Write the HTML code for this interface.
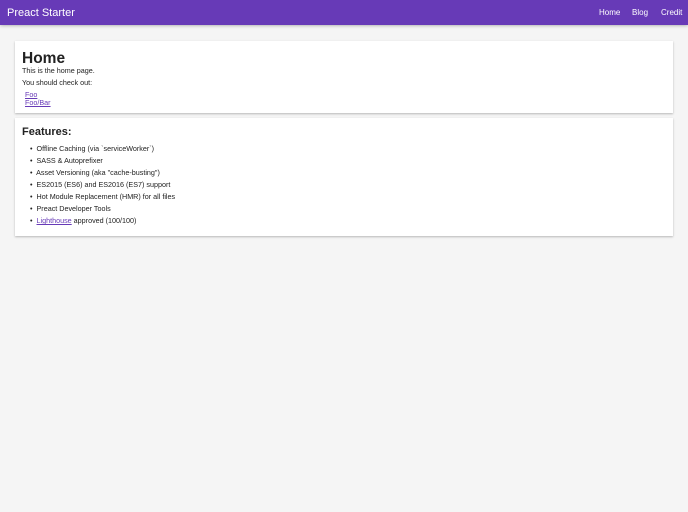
<!DOCTYPE html>
<html><head><style>
*{box-sizing:border-box}
body{margin:0;background:#f5f5f5;font-family:"Liberation Sans",sans-serif;color:#222;width:688px;height:512px;overflow:hidden}
.hdr{position:absolute;left:0;top:0;width:688px;height:25px;background:#673ab7;box-shadow:0 0 4px rgba(0,0,0,.4)}
.hdr .t{position:absolute;left:7px;top:7px;font-size:11px;color:#fff}
.hdr .n{position:absolute;top:8px;font-size:8px;color:#fff}
.card{position:absolute;left:15px;width:658px;background:#fff;box-shadow:0 1px 2px rgba(0,0,0,.25)}
.a{color:#673ab7;text-decoration:underline}
.p{position:absolute;font-size:7.2px;white-space:nowrap}
</style></head><body>
<div class="hdr"><div class="t">Preact Starter</div>
<div class="n" style="left:599px">Home</div><div class="n" style="left:632px">Blog</div><div class="n" style="left:661px">Credit</div></div>
<div class="card" style="top:41px;height:72px">
<div class="p" style="left:7px;top:9px;font-size:15.5px;font-weight:bold">Home</div>
<div class="p" style="left:7px;top:25px">This is the home page.</div>
<div class="p" style="left:7px;top:37px">You should check out:</div>
<div class="p a" style="left:10px;top:49px">Foo</div>
<div class="p a" style="left:10px;top:57px">Foo/Bar</div>
</div>
<div class="card" style="top:118px;height:118px">
<div class="p" style="left:7px;top:8px;font-size:11px;font-weight:bold">Features:</div>
<div class="p" style="left:15px;top:26px">•&nbsp; Offline Caching (via `serviceWorker`)</div>
<div class="p" style="left:15px;top:38px">•&nbsp; SASS &amp; Autoprefixer</div>
<div class="p" style="left:15px;top:50px">•&nbsp; Asset Versioning (aka "cache-busting")</div>
<div class="p" style="left:15px;top:62px">•&nbsp; ES2015 (ES6) and ES2016 (ES7) support</div>
<div class="p" style="left:15px;top:74px">•&nbsp; Hot Module Replacement (HMR) for all files</div>
<div class="p" style="left:15px;top:86px">•&nbsp; Preact Developer Tools</div>
<div class="p" style="left:15px;top:98px">•&nbsp; <span class="a">Lighthouse</span> approved (100/100)</div>
</div>
</body></html>
